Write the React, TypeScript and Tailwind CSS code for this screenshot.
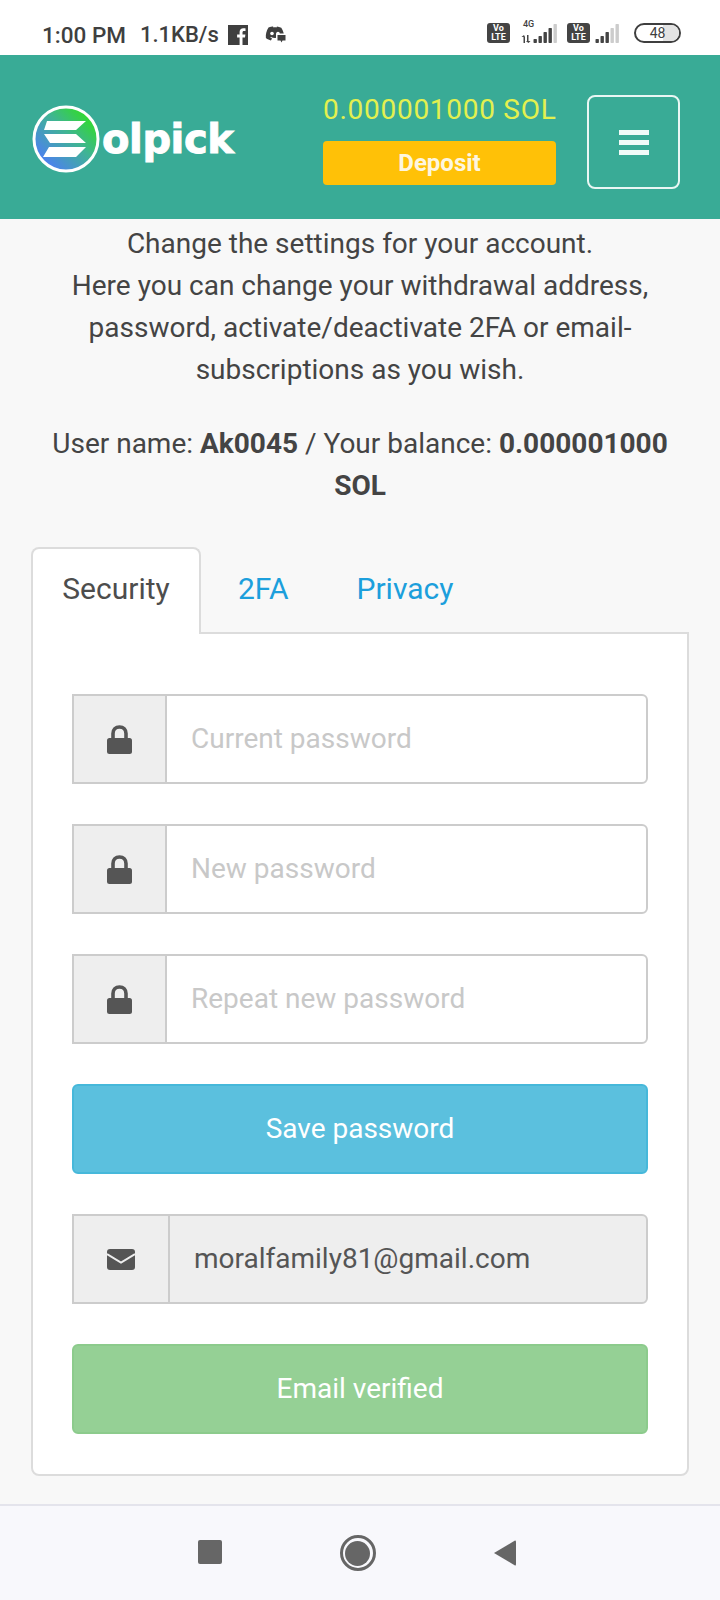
import React from "react";

function Signal({ on }: { on: number }) {
  const heights = [4, 7, 11, 15, 19];
  return (
    <svg width="24" height="20" viewBox="0 0 24 20">
      {heights.map((h, i) => (
        <rect key={i} x={0.5 + i * 5} y={20 - h} width="3.4" height={h} rx="0.7" fill={i < on ? "#444" : "#ccc"} />
      ))}
    </svg>
  );
}

function Volte() {
  return (
    <div className="flex h-[20px] w-[23px] flex-col items-center justify-center rounded-[3px] bg-[#444] text-[9px] leading-[9px] font-bold text-white">
      <span>Vo</span>
      <span>LTE</span>
    </div>
  );
}

function Facebook() {
  return (
    <svg width="20" height="20" viewBox="0 0 20 20" className="ml-[9px]">
      <rect width="20" height="20" fill="#3f3f3f" />
      <path d="M14.500 20V12.500H17L17.400 9.500H14.500V7.600C14.500 6.700 14.800 6.100 16 6.100H17.500V3.400C17.200 3.400 16.300 3.300 15.300 3.300C13.100 3.300 11.600 4.600 11.600 7.100V9.500H9.100V12.500H11.600V20Z" fill="#fff" />
    </svg>
  );
}

function DiscordBubble() {
  return (
    <svg width="23" height="18" viewBox="0 0 23 18" className="ml-[15px]">
      <path
        d="M5.500 1.500C7.500 0.700 9 0.400 10 0.400L10.600 1.500C11.600 1.300 12.500 1.300 13.400 1.500L14 0.400C15.200 0.500 16.700 0.900 18.300 1.700C20.400 5 21.300 8.300 21 12C19.300 13.400 17.600 14.100 16 14.400L14.800 12.600C15.500 12.300 16.100 12 16.600 11.600L16 11.100C13.300 12.300 10.500 12.300 7.900 11.100L7.300 11.600C7.800 12 8.400 12.300 9.100 12.600L7.900 14.400C6.300 14.100 4.600 13.400 2.900 12C2.500 8.300 3.400 5 5.500 1.500Z"
        fill="#3f3f3f"
      />
      <circle cx="9" cy="7.500" r="1.800" fill="#fff" />
      <circle cx="15" cy="7.500" r="1.800" fill="#fff" />
      <rect x="13" y="7.500" width="10" height="8" fill="#fff" />
      <path d="M14.500 9H22.500V14.500H19.500L18.500 16.500L17.500 14.500H14.500Z" fill="#3f3f3f" />
    </svg>
  );
}

function StatusBar() {
  return (
    <div className="flex h-[55px] items-start justify-between bg-white pt-[23px] pr-[39px] pl-[42px] text-[#3f3f3f]">
      <div className="flex items-center leading-[24px]">
        <span className="text-[22.500px] font-medium">1:00 PM</span>
        <span className="ml-[14px] text-[22px] font-medium">1.1KB/s</span>
        <Facebook />
        <DiscordBubble />
      </div>
      <div className="flex items-center">
        <Volte />
        <div className="relative ml-[10px] h-[20px] w-[37px]">
          <span className="absolute top-[-4px] left-[3px] text-[9px] leading-[10px] font-medium">4G</span>
          <svg width="10" height="8" viewBox="0 0 10 8" className="absolute bottom-[0px] left-[1px]">
            <path d="M2.500 8V2H0.500L3 0L4 2V8Z M6 0V6H4.800L7.500 8L9.500 6H7.500V0Z" fill="#444" />
          </svg>
          <div className="absolute right-0 bottom-0"><Signal on={4} /></div>
        </div>
        <div className="ml-[10px]"><Volte /></div>
        <div className="ml-[5px]"><Signal on={3} /></div>
        <div className="relative ml-[15px] flex h-[20px] w-[47px] items-center justify-center overflow-hidden rounded-full border-2 border-[#3f3f3f] text-[14px] leading-[16px]">
          <span className="relative z-10">48</span>
          <div className="absolute top-0 right-0 bottom-0 w-[16px] bg-[#e3e3e3]" />
        </div>
      </div>
    </div>
  );
}

function Logo() {
  return (
    <div className="mb-[7px] flex items-center">
      <svg width="68" height="68" viewBox="0 0 68 68" className="shrink-0">
        <defs>
          <linearGradient id="sol" x1="0.9" y1="0.1" x2="0.15" y2="0.85">
            <stop offset="0" stopColor="#2fe01e" />
            <stop offset="0.45" stopColor="#3fb592" />
            <stop offset="1" stopColor="#4d80f0" />
          </linearGradient>
        </defs>
        <circle cx="34" cy="34" r="32" fill="url(#sol)" stroke="#fff" strokeWidth="3" />
        <path d="M15 16H54L44 25H12Z M12 29H44L54 38H18Z M17 42H54L44 52H11Z" fill="#fff" />
      </svg>
      <span className="ml-[2px] font-['DejaVu_Sans',sans-serif] text-[40px] leading-[40px] font-bold tracking-[-0.4px] text-white [-webkit-text-stroke:1px_white]">olpick</span>
    </div>
  );
}

function Header() {
  return (
    <div className="flex h-[164px] items-center bg-[#39ab96] pt-[10px] pr-[40px] pl-[32px]">
      <Logo />
      <div className="mb-[5px] ml-auto flex w-[233px] flex-col">
        <div className="text-right text-[28px] leading-[32px] tracking-[0.72px] whitespace-nowrap text-[#e3f04f]">0.000001000 SOL</div>
        <button className="mt-[15px] h-[44px] rounded-[4px] bg-[#ffc107] text-[24px] font-bold text-[#fdf6e0]">Deposit</button>
      </div>
      <button className="ml-[31px] flex h-[94px] w-[93px] flex-col items-center justify-center gap-[5px] rounded-[8px] border-2 border-[#e9f7f4]">
        <span className="h-[5px] w-[30px] bg-[#f0fbf8]" />
        <span className="h-[5px] w-[30px] bg-[#f0fbf8]" />
        <span className="h-[5px] w-[30px] bg-[#f0fbf8]" />
      </button>
    </div>
  );
}

function LockRow({ placeholder }: { placeholder: string }) {
  return (
    <div className="flex h-[90px] overflow-hidden rounded-r-[6px] border-2 border-[#cccccc] bg-white">
      <div className="flex w-[93px] items-center justify-center border-r-2 border-[#cccccc] bg-[#eeeeee]">
        <svg width="25" height="29" viewBox="0 0 25 29">
          <path d="M6 15V8.500C6 4.500 8.500 2 12.500 2S19 4.500 19 8.500V15" fill="none" stroke="#555" strokeWidth="3.600" />
          <rect x="0" y="13" width="25" height="16" rx="2.500" fill="#555" />
        </svg>
      </div>
      <div className="flex flex-1 items-center pl-[24px] text-[28px] text-[#c8c8c8]">{placeholder}</div>
    </div>
  );
}

export default function App() {
  return (
    <div className="flex h-[1600px] w-[720px] flex-col overflow-hidden bg-[#f8f8f8] font-['Roboto',sans-serif] text-[#444]">
      <StatusBar />
      <Header />
      <div className="flex-1 px-[31px] pt-[4px]">
        <div className="text-center text-[28px] leading-[42px]">
          <p>Change the settings for your account.</p>
          <p>Here you can change your withdrawal address, password, activate/deactivate 2FA or email-subscriptions as you wish.</p>
          <p className="mt-[32px]">
            User name: <b>Ak0045</b> / Your balance: <b>0.000001000 SOL</b>
          </p>
        </div>
        <div className="mt-[40px] flex h-[85px] text-[30px]">
          <div className="z-10 -mb-[2px] flex h-[87px] w-[170px] items-start justify-center rounded-t-[8px] border-2 border-b-0 border-[#dcdcdc] bg-white pt-[21px] leading-[38px] text-[#4d4d4d]">Security</div>
          <div className="ml-[37px] pt-[23px] leading-[38px] text-[#1c9fdc]">2FA</div>
          <div className="ml-[68px] pt-[23px] leading-[38px] text-[#1c9fdc]">Privacy</div>
        </div>
        <div className="flex h-[844px] flex-col gap-[40px] rounded-b-[8px] border-2 border-[#dcdcdc] bg-white px-[39px] pt-[60px]">
          <LockRow placeholder="Current password" />
          <LockRow placeholder="New password" />
          <LockRow placeholder="Repeat new password" />
          <button className="h-[90px] rounded-[6px] border-2 border-[#46b8da] bg-[#5bc0de] text-[28px] text-white">Save password</button>
          <div className="flex h-[90px] overflow-hidden rounded-r-[6px] border-2 border-[#cccccc] bg-[#eeeeee]">
            <div className="flex w-[96px] items-center justify-center border-r-2 border-[#cccccc]">
              <svg width="28" height="21" viewBox="0 0 28 21">
                <rect width="28" height="21" rx="3" fill="#555" />
                <path d="M0 5L14 13.500L28 5" fill="none" stroke="#eeeeee" strokeWidth="2" />
              </svg>
            </div>
            <div className="flex flex-1 items-center pl-[24px] text-[28px] text-[#555]">moralfamily81@gmail.com</div>
          </div>
          <button className="h-[90px] rounded-[6px] border-2 border-[#8ccb8c] bg-[#95d095] text-[28px] text-white">Email verified</button>
        </div>
      </div>
      <div className="flex h-[96px] items-start justify-between border-t-2 border-[#e4e4ec] bg-[#f8f8fc] pt-[29px] pr-[203px] pl-[198px]">
        <div className="mt-[5px] h-[24px] w-[24px] rounded-[2px] bg-[#666]" />
        <div className="flex h-[36px] w-[36px] items-center justify-center rounded-full border-[3px] border-[#666]">
          <div className="h-[25px] w-[25px] rounded-full bg-[#666]" />
        </div>
        <svg width="24" height="28" viewBox="0 0 24 28" className="mt-[4px]"><path d="M1 14L22 1.500Q23 1 23 3V25Q23 27 22 26.500Z" fill="#666" /></svg>
      </div>
    </div>
  );
}
